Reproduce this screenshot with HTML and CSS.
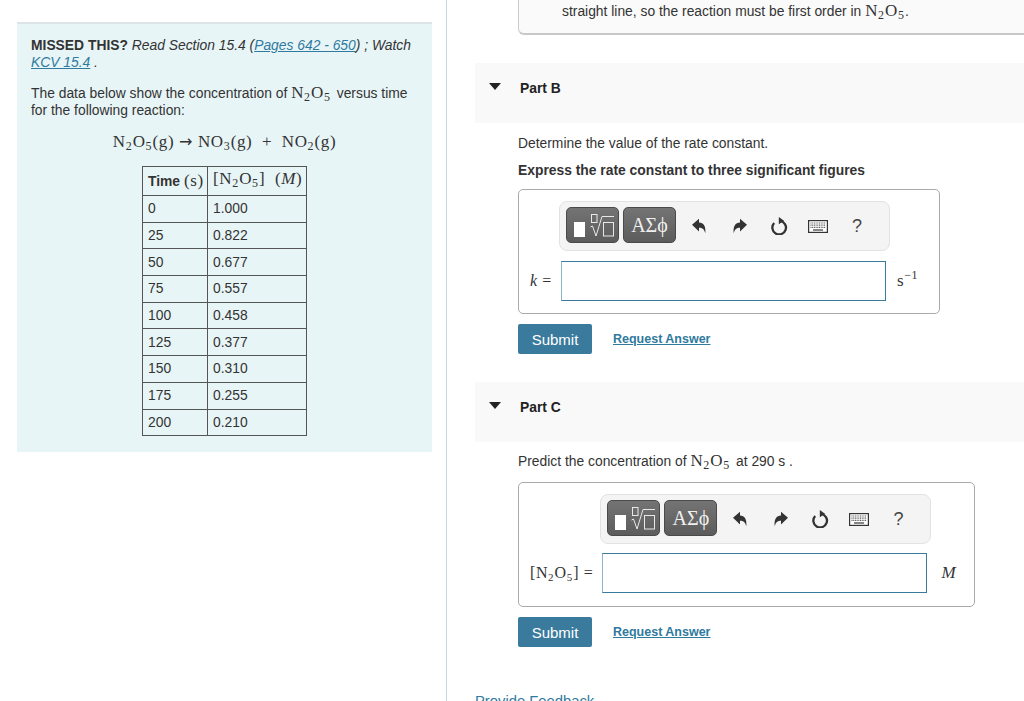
FILE: index.html
```html
<!DOCTYPE html>
<html lang="en">

<head>
    <meta charset="UTF-8">
    <title>Part B</title>
    <link rel="stylesheet" href="styles.css">
</head>

<body>
    <svg class="defs" width="0" height="0">
        <symbol id="templates" viewBox="0 0 24 23">
            <g fill="none" stroke="#e8e8e8" stroke-width="1">
                <rect x="1.500" y=".5" width="5.500" height="8" />
                <path d="M.5 13 2.500 12 6 22 12 2.500H24" />
                <rect x="13.500" y="8.500" width="10" height="13.500" />
            </g>
        </symbol>
        <symbol id="undo" viewBox="0 0 16 16">
            <path d="M1 6.800 8 .8v3.700c4.600.1 7 3.400 6.300 10.700-1-3.800-2.800-5.500-6.300-5.500v3.800z" />
        </symbol>
        <symbol id="redo" viewBox="0 0 16 16">
            <path d="M15 6.800 8 .8v3.700c-4.600.1-7 3.400-6.300 10.700 1-3.800 2.800-5.500 6.300-5.500v3.800z" />
        </symbol>
        <symbol id="reset" viewBox="0 0 18 18">
            <path d="M10 3.900A6.800 6.800 0 1 1 4.200 6" fill="none" stroke="currentColor" stroke-width="2.300" />
            <path d="M8.800 0 14 3.800 8.800 7.200z" />
        </symbol>
        <symbol id="keys" viewBox="0 0 20 13">
            <rect x=".6" y=".6" width="18.800" height="11.800" fill="#fff" stroke="currentColor" stroke-width="1.200" />
            <path d="M2.500 3h15M2.500 5.200h15M2.500 7.400h15" stroke="#555" stroke-width="1.200" stroke-dasharray="1 .7" />
            <path d="M5 10h10" stroke="#444" stroke-width="1.300" />
        </symbol>
    </svg>

    <div class="left">
        <div class="intro">
            <p><b>MISSED THIS?</b> <i>Read Section 15.4 (<a href="#">Pages 642 - 650</a>) ; Watch <a href="#">KCV 15.4</a> .</i></p>
            <p>The data below show the concentration of <span class="math">N<sub>2</sub>O<sub>5</sub></span> versus time for the following reaction:</p>
            <div class="equation math">N<sub>2</sub>O<sub>5</sub>(g) <span class="arr">→</span> NO<sub>3</sub>(g) &nbsp;+&nbsp; NO<sub>2</sub>(g)</div>
            <table class="data">
                <tr>
                    <th><b>Time</b> <span class="math">(s)</span></th>
                    <th class="math">[N<sub>2</sub>O<sub>5</sub>] &nbsp;(<i>M</i>)</th>
                </tr>
                <tr><td>0</td><td>1.000</td></tr>
                <tr><td>25</td><td>0.822</td></tr>
                <tr><td>50</td><td>0.677</td></tr>
                <tr><td>75</td><td>0.557</td></tr>
                <tr><td>100</td><td>0.458</td></tr>
                <tr><td>125</td><td>0.377</td></tr>
                <tr><td>150</td><td>0.310</td></tr>
                <tr><td>175</td><td>0.255</td></tr>
                <tr><td>200</td><td>0.210</td></tr>
            </table>
        </div>
    </div>

    <div class="right">
        <div class="prev-answer">straight line, so the reaction must be first order in <span class="math">N<sub>2</sub>O<sub>5</sub></span>.</div>

        <div class="part-head"><span class="caret"></span><b>Part B</b></div>
        <div class="part-body">
            <p>Determine the value of the rate constant.</p>
            <p><b>Express the rate constant to three significant figures</b></p>
            <div class="answer-box">
                <div class="toolbar">
                    <button class="tool-btn"><span class="blk"></span><svg class="root"><use href="#templates" /></svg></button>
                    <button class="tool-btn greek">ΑΣϕ</button>
                    <svg class="ico un"><use href="#undo" /></svg>
                    <svg class="ico re"><use href="#redo" /></svg>
                    <svg class="ico rs"><use href="#reset" /></svg>
                    <svg class="ico kb"><use href="#keys" /></svg>
                    <span class="help">?</span>
                </div>
                <div class="label math"><i>k</i> =</div>
                <div class="input"></div>
                <div class="unit math">s<sup>−1</sup></div>
            </div>
            <div class="actions"><button class="submit">Submit</button><a class="req" href="#">Request Answer</a></div>
        </div>

        <div class="part-head head-c"><span class="caret"></span><b>Part C</b></div>
        <div class="part-body body-c">
            <p>Predict the concentration of <span class="math">N<sub>2</sub>O<sub>5</sub></span> at 290 s .</p>
            <div class="answer-box wide">
                <div class="toolbar">
                    <button class="tool-btn"><span class="blk"></span><svg class="root"><use href="#templates" /></svg></button>
                    <button class="tool-btn greek">ΑΣϕ</button>
                    <svg class="ico un"><use href="#undo" /></svg>
                    <svg class="ico re"><use href="#redo" /></svg>
                    <svg class="ico rs"><use href="#reset" /></svg>
                    <svg class="ico kb"><use href="#keys" /></svg>
                    <span class="help">?</span>
                </div>
                <div class="label math">[N<sub>2</sub>O<sub>5</sub>] =</div>
                <div class="input"></div>
                <div class="unit math"><i>M</i></div>
            </div>
            <div class="actions"><button class="submit">Submit</button><a class="req" href="#">Request Answer</a></div>
        </div>

        <a class="feedback" href="#">Provide Feedback</a>
    </div>
</body>

</html>
```

FILE: styles.css
```css
html,
body {
    height: 701px;
    overflow: hidden;
}

body {
    margin: 0;
    display: flex;
    font-family: "Liberation Sans", Arial, sans-serif;
    font-size: 13.850px;
    line-height: 17px;
    color: #333;
}

a {
    color: #2f7a9e;
}

p {
    margin: 0;
}

.defs {
    position: absolute;
}

.math {
    font-family: "Liberation Serif", "Times New Roman", serif;
    font-size: 17px;
    letter-spacing: .6px;
    line-height: 0;
}

p .math {
    margin-right: 2px;
}

.math sub {
    font-size: 12px;
    line-height: 0;
    letter-spacing: 1px;
    vertical-align: -3px;
}

.arr {
    font-family: "DejaVu Sans", sans-serif;
    font-size: 16px;
}

/* left column */
.left {
    flex: none;
    width: 447px;
    box-sizing: border-box;
    border-right: 1px solid #c6d5e4;
    padding: 22px 14px 0 17px;
}

.intro {
    background-color: #e8f5f7;
    border-top: 2px solid #dde4e8;
    padding: 13px 14px 17px;
    height: 430px;
    box-sizing: border-box;
}

.intro p {
    margin-bottom: 14px;
}

.equation {
    text-align: center;
    margin: 0 0 15px;
    line-height: 18px;
}

.data {
    border-collapse: collapse;
    table-layout: fixed;
    margin: 0 auto;
    width: 165px;
}

.data th,
.data td {
    border: 1px solid #555;
    padding: 0 4px 0 5px;
    text-align: left;
    font-weight: normal;
    height: 25.700px;
    white-space: nowrap;
}

.data th {
    height: 28px;
}

.data th:first-child {
    width: 55px;
}

/* right column */
.right {
    flex: 1;
    min-width: 0;
    padding-left: 28px;
}

.prev-answer {
    margin-left: 43px;
    height: 35px;
    padding: 3px 0 0 43px;
    box-sizing: border-box;
    background-color: #fafafa;
    border: 1px solid #ccc;
    border-top: none;
    border-right: none;
    border-bottom: 2px solid #c8c8c8;
    border-bottom-left-radius: 6px;
}

.part-head {
    margin-top: 28px;
    height: 60px;
    padding: 17px 0 0 14px;
    box-sizing: border-box;
    background-color: #f9f9f9;
    display: flex;
    align-items: flex-start;
    color: #222;
}

.caret {
    width: 0;
    height: 0;
    margin: 3px 19px 0 0;
    border-left: 6px solid transparent;
    border-right: 6px solid transparent;
    border-top: 7px solid #222;
}

.part-body {
    margin-left: 43px;
    padding-top: 12px;
}

.body-c {
    padding-top: 11px;
}

.part-body>p {
    margin-bottom: 10px;
}

.answer-box {
    display: grid;
    grid-template-columns: auto 325px auto;
    justify-content: start;
    align-content: start;
    column-gap: 9px;
    row-gap: 10px;
    width: 422px;
    height: 125px;
    box-sizing: border-box;
    padding: 11px 0 0 11px;
    border: 1px solid #aaa;
    border-radius: 5px;
}

.answer-box.wide {
    width: 457px;
    margin-top: 12px;
    row-gap: 9px;
}

.toolbar {
    grid-column: 2 / 4;
    width: 331px;
    height: 50px;
    margin-left: -2px;
    padding-left: 6px;
    box-sizing: border-box;
    display: flex;
    align-items: center;
    background-color: #f4f4f4;
    border: 1px solid #e2e2e2;
    border-radius: 8px;
    color: #333;
}

.tool-btn {
    flex: none;
    width: 53px;
    height: 36px;
    margin: -2px 4px 0 0;
    padding: 0;
    border: 1px solid #4a4a4a;
    border-radius: 5px;
    background: linear-gradient(#747474, #5c5c5c);
    color: #fff;
    display: flex;
    align-items: center;
    justify-content: center;
}

.greek {
    font-family: "Liberation Serif", serif;
    font-size: 20px;
    color: #f0f0f0;
}

.blk {
    width: 11px;
    height: 15px;
    margin: 9px 5px 0 3px;
    background-color: #fff;
}

.root {
    width: 24px;
    height: 23px;
}

.ico {
    flex: none;
    width: 16px;
    height: 16px;
    fill: #333;
}

.ico.un {
    margin-left: 11px;
}

.ico.re {
    margin-left: 25px;
}

.ico.rs {
    width: 18px;
    height: 18px;
    margin-left: 22px;
}

.ico.kb {
    width: 20px;
    height: 13px;
    margin-left: 20px;
}

.help {
    margin-left: 24px;
    font-size: 18px;
    color: #444;
}

.label {
    align-self: center;
    font-size: 16px;
    line-height: 20px;
    white-space: nowrap;
}

.label sub {
    font-size: 11px;
}

.input {
    height: 40px;
    box-sizing: border-box;
    border: 1px solid #3a7a9c;
    border-left-color: #8db4c8;
    background-color: #fff;
}

.unit {
    align-self: center;
    line-height: 20px;
    margin-left: 2px;
}

.wide .unit {
    margin-left: 5px;
}

.unit sup {
    font-size: 12px;
    line-height: 0;
}

.actions {
    display: flex;
    align-items: center;
    margin-top: 10px;
}

.submit {
    width: 74px;
    height: 30px;
    padding: 0;
    border: none;
    border-radius: 2px;
    background-color: #3a7a9c;
    color: #fff;
    font-family: inherit;
    font-size: 15px;
}

.req {
    margin-left: 21px;
    font-size: 12.500px;
    font-weight: bold;
}

.feedback {
    display: block;
    margin-top: 46px;
    font-size: 14.800px;
    text-decoration: none;
}
```
